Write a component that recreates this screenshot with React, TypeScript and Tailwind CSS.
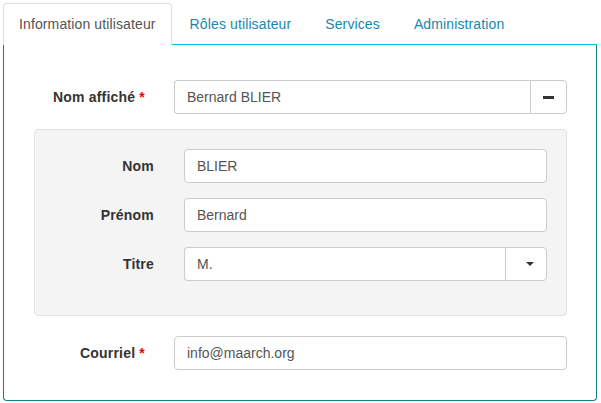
import React from "react";

export default function App() {
  return (
    <div className="font-['Liberation_Sans',Arial,sans-serif] text-[14px] leading-[20px] text-[#333] bg-white w-[601px] h-[403px] pl-[3px] pr-[4px] pt-[3px]">
      <ul className="flex border-b border-[#00c0ec] tracking-[0.12px]">
        <li className="-mb-px mr-[2px]">
          <a className="block px-[15px] py-[10px] border border-[#ddd] border-b-transparent rounded-t-[4px] bg-white text-[#555]">
            Information utilisateur
          </a>
        </li>
        <li className="-mb-px mr-[2px]">
          <a className="block px-[15px] py-[10px] border border-transparent text-[#1a87ad]">Rôles utilisateur</a>
        </li>
        <li className="-mb-px mr-[2px]">
          <a className="block px-[15px] py-[10px] border border-transparent text-[#1a87ad]">Services</a>
        </li>
        <li className="-mb-px mr-[2px]">
          <a className="block px-[15px] py-[10px] border border-transparent text-[#1a87ad]">Administration</a>
        </li>
      </ul>
      <div className="border border-t-0 border-[#137c91] rounded-b-[4px] pl-[30px] pr-[29px] pt-[35px] pb-[15px]">
        <div className="flex mb-[15px]">
          <label className="w-[111px] text-right font-bold pt-[7px] tracking-[0.2px]">
            Nom affiché <span className="text-[#e00]">*</span>
          </label>
          <div className="ml-[29px] flex-1 flex h-[34px]">
            <div className="flex-1 border border-r-0 border-[#ccc] rounded-l-[4px] px-[12px] py-[6px] text-[#555] bg-white">
              Bernard BLIER
            </div>
            <div className="w-[37px] border border-[#ccc] rounded-r-[4px] bg-white flex items-center pl-[12px]">
              <div className="w-[11px] h-[3px] bg-[#333]" />
            </div>
          </div>
        </div>
        <div className="border border-[#e3e3e3] bg-[#f4f4f4] rounded-[4px] p-[19px] mb-[20px]">
          {[
            ["Nom", "BLIER"],
            ["Prénom", "Bernard"],
          ].map(([l, v]) => (
            <div key={l} className="flex mb-[15px]">
              <label className="w-[100px] text-right font-bold pt-[7px] tracking-[0.2px]">{l}</label>
              <div className="ml-[30px] flex-1 h-[34px] border border-[#ccc] rounded-[4px] px-[12px] py-[6px] text-[#555] bg-white">
                {v}
              </div>
            </div>
          ))}
          <div className="flex mb-[15px]">
            <label className="w-[100px] text-right font-bold pt-[7px] tracking-[0.2px]">Titre</label>
            <div className="ml-[30px] flex-1 flex h-[34px]">
              <div className="flex-1 border border-r-0 border-[#ccc] rounded-l-[4px] px-[12px] py-[6px] text-[#555] bg-white">
                M.
              </div>
              <div className="w-[42px] border border-[#ccc] rounded-r-[4px] bg-white flex items-center pl-[20px]">
                <div className="w-0 h-0 border-l-[4px] border-r-[4px] border-t-[4px] border-l-transparent border-r-transparent border-t-[#333]" />
              </div>
            </div>
          </div>
        </div>
        <div className="flex mb-[15px]">
          <label className="w-[111px] text-right font-bold pt-[7px] tracking-[0.2px]">
            Courriel <span className="text-[#e00]">*</span>
          </label>
          <div className="ml-[29px] flex-1 h-[34px] border border-[#ccc] rounded-[4px] px-[12px] py-[6px] text-[#555] bg-white">
            info@maarch.org
          </div>
        </div>
      </div>
    </div>
  );
}
